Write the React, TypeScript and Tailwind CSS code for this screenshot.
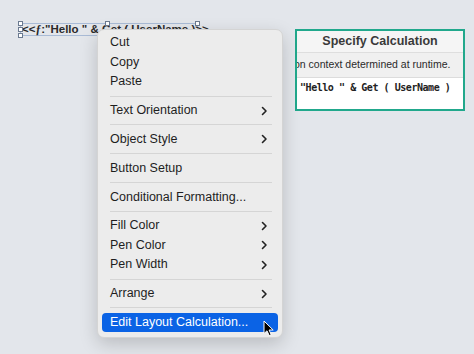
import React from "react";

type Entry = { label: string; sub?: boolean; active?: boolean } | "sep";

const entries: Entry[] = [
  { label: "Cut" },
  { label: "Copy" },
  { label: "Paste" },
  "sep",
  { label: "Text Orientation", sub: true },
  "sep",
  { label: "Object Style", sub: true },
  "sep",
  { label: "Button Setup" },
  "sep",
  { label: "Conditional Formatting..." },
  "sep",
  { label: "Fill Color", sub: true },
  { label: "Pen Color", sub: true },
  { label: "Pen Width", sub: true },
  "sep",
  { label: "Arrange", sub: true },
  "sep",
  { label: "Edit Layout Calculation...", active: true },
];

function Chevron() {
  return (
    <svg width="7" height="10" viewBox="0 0 7 10" className="shrink-0">
      <polyline points="1.5,1.5 5,5 1.5,8.5" fill="none" stroke="#222" strokeWidth="1.6" strokeLinecap="round" strokeLinejoin="round" />
    </svg>
  );
}

function Handle({ className }: { className: string }) {
  return <div className={"absolute w-[5px] h-[5px] border border-[#6b7a90] bg-white " + className} />;
}

function Pointer() {
  return (
    <svg width="12" height="17" viewBox="0 0 12 17" className="absolute right-[3px] top-[7px]">
      <path d="M1 1 L1 13.5 L4 10.8 L6.2 15.6 L8.2 14.7 L6.1 10 L10.2 10 Z" fill="#000" stroke="#fff" strokeWidth="1" strokeLinejoin="round" />
    </svg>
  );
}

export default function App() {
  return (
    <div className="relative w-[474px] h-[354px] overflow-hidden bg-[#e3e6eb] font-['Liberation_Sans',Arial,sans-serif] flex items-start pl-[20px] pt-[23px]">
      {/* layout field */}
      <div className="relative w-[178px] h-[13px] shrink-0 border border-[#a9bbd6]">
        <div className="whitespace-nowrap text-[11.5px] font-bold leading-[11px] text-[#2a2a2a] pl-[1px]">
          {"<<"}
          <i className="font-['Liberation_Serif',serif]">ƒ</i>
          {':"Hello " & Get ( UserName )>>'}
        </div>
        <Handle className="-left-[3px] -top-[3px]" />
        <Handle className="-right-[3px] -top-[3px]" />
        <Handle className="left-[84px] -top-[3px]" />
        <Handle className="-left-[3px] -bottom-[3px]" />
        <Handle className="-left-[3px] top-[3px]" />
      </div>

      {/* calculation callout */}
      <div className="ml-[97px] mt-[6px] w-[170px] h-[82px] shrink-0 border-2 border-[#21a88c] bg-white flex flex-col overflow-hidden">
        <div className="h-[22px] flex items-center justify-center bg-[#f5f5f5] border-b border-[#dedede] text-[12.5px] font-bold text-[#3a3a3a]">
          Specify Calculation
        </div>
        <div className="h-[25px] flex items-center bg-[#f0f0f0] border-b border-[#dcdcdc] text-[10.5px] text-[#2a2a2a] whitespace-nowrap">
          <span className="-ml-[3px]">on context determined at runtime.</span>
        </div>
        <div className="pt-[2px] pl-[3px] text-[10px] font-bold font-['DejaVu_Sans_Mono',monospace] text-[#222] whitespace-nowrap tracking-[-0.45px]">
          "Hello " &amp; Get ( UserName )
        </div>
      </div>

      {/* context menu */}
      <div className="absolute left-[97px] top-[29px] w-[186px] pt-[3px] pb-[5px] rounded-[7px] bg-[#ececec] border border-[#d4d4d4] shadow-[0_6px_18px_rgba(0,0,0,0.18)] flex flex-col text-[12.5px] text-[#1e1e1e]">
        {entries.map((e, i) =>
          e === "sep" ? (
            <div key={i} className="h-[9.3px] flex items-center pl-[12px] pr-[10px]">
              <div className="h-px w-full bg-[#d5d5d5]" />
            </div>
          ) : (
            <div
              key={i}
              className={
                e.active
                  ? "relative mx-[4px] h-[19.5px] flex items-center justify-between pl-[8px] pr-[10px] rounded-[4px] bg-[#0b63e5] text-white"
                  : "mx-[4px] h-[19.5px] flex items-center justify-between pl-[8px] pr-[10px]"
              }
            >
              <span>{e.label}</span>
              {e.sub && <Chevron />}
              {e.active && <Pointer />}
            </div>
          )
        )}
      </div>
    </div>
  );
}
